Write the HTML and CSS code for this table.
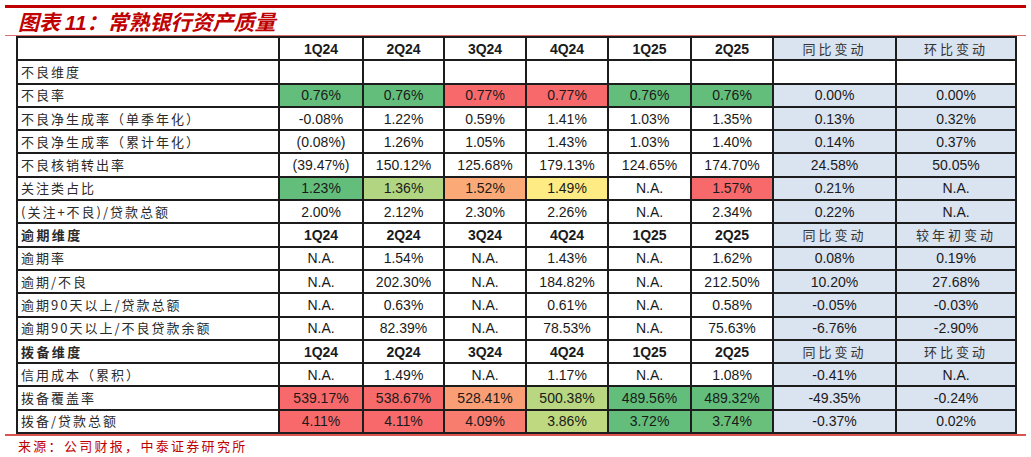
FILE: index.html
```html
<!DOCTYPE html>
<html lang="zh">
<head>
<meta charset="utf-8">
<title>图表 11：常熟银行资产质量</title>
<link rel="stylesheet" href="styles.css">
</head>
<body>
<div class="page">
  <div class="title-bar"><h1 class="title">图表 <span class="num">11</span>：常熟银行资产质量</h1></div>
  <table class="grid">
    <colgroup>
      <col class="c-label"><col class="c-q1"><col class="c-q2"><col class="c-q3"><col class="c-q4"><col class="c-q5"><col class="c-q6"><col class="c-yoy"><col class="c-qoq">
    </colgroup>
    <tbody>
      <tr class="head">
        <td class="label"></td><td>1Q24</td><td>2Q24</td><td>3Q24</td><td>4Q24</td><td>1Q25</td><td>2Q25</td><td class="chg cn">同比变动</td><td class="chg cn">环比变动</td>
      </tr>
      <tr>
        <td class="label">不良维度</td><td></td><td></td><td></td><td></td><td></td><td></td><td></td><td></td>
      </tr>
      <tr>
        <td class="label">不良率</td><td class="g1">0.76%</td><td class="g1">0.76%</td><td class="r1">0.77%</td><td class="r1">0.77%</td><td class="g1">0.76%</td><td class="g1">0.76%</td><td class="chg">0.00%</td><td class="chg">0.00%</td>
      </tr>
      <tr>
        <td class="label">不良净生成率（单季年化）</td><td>-0.08%</td><td>1.22%</td><td>0.59%</td><td>1.41%</td><td>1.03%</td><td>1.35%</td><td class="chg">0.13%</td><td class="chg">0.32%</td>
      </tr>
      <tr>
        <td class="label">不良净生成率（累计年化）</td><td>(0.08%)</td><td>1.26%</td><td>1.05%</td><td>1.43%</td><td>1.03%</td><td>1.40%</td><td class="chg">0.14%</td><td class="chg">0.37%</td>
      </tr>
      <tr>
        <td class="label">不良核销转出率</td><td>(39.47%)</td><td>150.12%</td><td>125.68%</td><td>179.13%</td><td>124.65%</td><td>174.70%</td><td class="chg">24.58%</td><td class="chg">50.05%</td>
      </tr>
      <tr>
        <td class="label">关注类占比</td><td class="g1">1.23%</td><td class="lg">1.36%</td><td class="or">1.52%</td><td class="ye">1.49%</td><td>N.A.</td><td class="r1">1.57%</td><td class="chg">0.21%</td><td class="chg">N.A.</td>
      </tr>
      <tr>
        <td class="label">(关注+不良)/贷款总额</td><td>2.00%</td><td>2.12%</td><td>2.30%</td><td>2.26%</td><td>N.A.</td><td>2.34%</td><td class="chg">0.22%</td><td class="chg">N.A.</td>
      </tr>
      <tr class="head">
        <td class="label">逾期维度</td><td>1Q24</td><td>2Q24</td><td>3Q24</td><td>4Q24</td><td>1Q25</td><td>2Q25</td><td class="chg cn">同比变动</td><td class="chg cn">较年初变动</td>
      </tr>
      <tr>
        <td class="label">逾期率</td><td>N.A.</td><td>1.54%</td><td>N.A.</td><td>1.43%</td><td>N.A.</td><td>1.62%</td><td class="chg">0.08%</td><td class="chg">0.19%</td>
      </tr>
      <tr>
        <td class="label">逾期/不良</td><td>N.A.</td><td>202.30%</td><td>N.A.</td><td>184.82%</td><td>N.A.</td><td>212.50%</td><td class="chg">10.20%</td><td class="chg">27.68%</td>
      </tr>
      <tr>
        <td class="label">逾期90天以上/贷款总额</td><td>N.A.</td><td>0.63%</td><td>N.A.</td><td>0.61%</td><td>N.A.</td><td>0.58%</td><td class="chg">-0.05%</td><td class="chg">-0.03%</td>
      </tr>
      <tr>
        <td class="label">逾期90天以上/不良贷款余额</td><td>N.A.</td><td>82.39%</td><td>N.A.</td><td>78.53%</td><td>N.A.</td><td>75.63%</td><td class="chg">-6.76%</td><td class="chg">-2.90%</td>
      </tr>
      <tr class="head">
        <td class="label">拨备维度</td><td>1Q24</td><td>2Q24</td><td>3Q24</td><td>4Q24</td><td>1Q25</td><td>2Q25</td><td class="chg cn">同比变动</td><td class="chg cn">环比变动</td>
      </tr>
      <tr>
        <td class="label">信用成本（累积）</td><td>N.A.</td><td>1.49%</td><td>N.A.</td><td>1.17%</td><td>N.A.</td><td>1.08%</td><td class="chg">-0.41%</td><td class="chg">N.A.</td>
      </tr>
      <tr>
        <td class="label">拨备覆盖率</td><td class="r1">539.17%</td><td class="r2">538.67%</td><td class="or2">528.41%</td><td class="lg2">500.38%</td><td class="g1">489.56%</td><td class="g1">489.32%</td><td class="chg">-49.35%</td><td class="chg">-0.24%</td>
      </tr>
      <tr>
        <td class="label">拨备/贷款总额</td><td class="r1">4.11%</td><td class="r1">4.11%</td><td class="sa">4.09%</td><td class="lg3">3.86%</td><td class="g1">3.72%</td><td class="g2">3.74%</td><td class="chg">-0.37%</td><td class="chg">0.02%</td>
      </tr>
    </tbody>
  </table>
  <div class="source">来源：公司财报，中泰证券研究所</div>
</div>
</body>
</html>
```

FILE: styles.css
```css
html, body {
  margin: 0;
  padding: 0;
  background: #ffffff;
}

.page {
  width: 1031px;
  padding-top: 5px;
  display: flex;
  flex-direction: column;
}

.title-bar {
  margin: 0 5px 0 5px;
  border-top: 3px solid #c00000;
  border-bottom: 1px solid #d9706f;
  height: 27px;
  padding-left: 13px;
}

.title {
  margin: 0;
  font-family: "Noto Sans CJK SC", "Noto Sans", sans-serif;
  font-size: 21px;
  font-weight: 700;
  font-style: italic;
  line-height: 27px;
  color: #c00000;
  white-space: nowrap;
}

.title .num {
  font-family: "Liberation Sans", Arial, sans-serif;
}

.grid {
  margin-left: 16px;
  width: 999px;
  table-layout: fixed;
  border-collapse: collapse;
  font-family: "Liberation Sans", Arial, sans-serif;
  font-size: 14px;
  color: #1a1a1a;
}

.c-label { width: 262px; }
.c-q1 { width: 84px; }
.c-q2 { width: 81px; }
.c-q3 { width: 82px; }
.c-q4 { width: 82px; }
.c-q5 { width: 83px; }
.c-q6 { width: 82px; }
.c-yoy { width: 123px; }
.c-qoq { width: 120px; }

.grid tr {
  height: 23.3px;
}

.grid td {
  border: 2px solid #1c1c1c;
  padding: 0;
  text-align: center;
  vertical-align: middle;
  line-height: 16px;
  white-space: nowrap;
  overflow: hidden;
}

.grid td.label {
  text-align: left;
  padding-left: 3px;
  font-family: "Noto Sans CJK SC", "Noto Sans", sans-serif;
  font-size: 13px;
  letter-spacing: 2px;
  color: #2a2a2a;
}

.grid tr.head td {
  font-weight: 700;
}

.grid tr.head td.label {
  font-weight: 700;
  letter-spacing: 2.4px;
}

.grid td.cn {
  font-family: "Noto Sans CJK SC", "Noto Sans", sans-serif;
  font-weight: 400 !important;
  font-size: 13px;
  letter-spacing: 3px;
  color: #333333;
}

.grid td.chg { background: #dae3f0; }

.grid td.g1 { background: #63be7b; }
.grid td.g2 { background: #69c07b; }
.grid td.lg { background: #b1d580; }
.grid td.lg2 { background: #b8d780; }
.grid td.lg3 { background: #bfd980; }
.grid td.ye { background: #ffeb84; }
.grid td.or { background: #fbaa77; }
.grid td.or2 { background: #fa9f75; }
.grid td.sa { background: #f97d6f; }
.grid td.r1 { background: #f8696b; }
.grid td.r2 { background: #f86b6b; }

.source {
  margin: 0 5px 0 5px;
  border-top: 2px solid #d9534f;
  padding-left: 13px;
  font-family: "Noto Sans CJK SC", "Noto Sans", sans-serif;
  font-size: 13px;
  letter-spacing: 2.3px;
  line-height: 19px;
  color: #c00000;
}
```
